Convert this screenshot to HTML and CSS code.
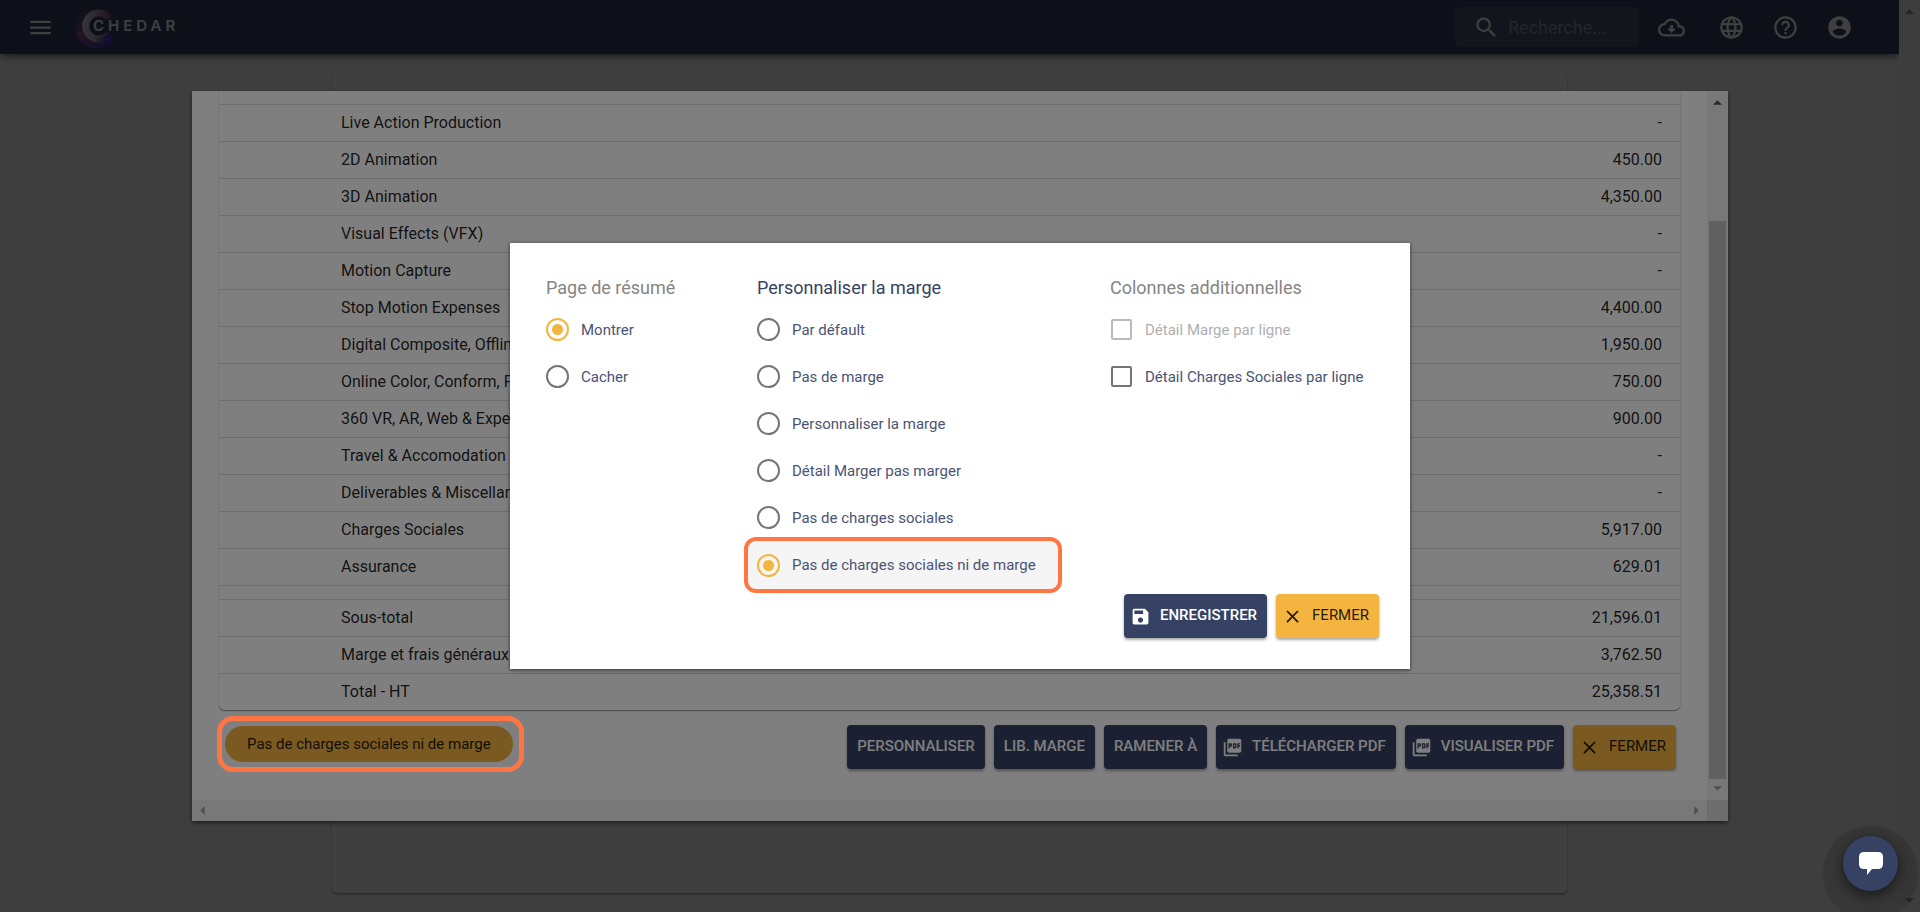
FILE: index.html
```html
<!DOCTYPE html>
<html lang="fr">
<head>
<meta charset="utf-8">
<title>Chedar</title>
<link rel="stylesheet" href="styles.css">
</head>
<body>
<svg class="defs" aria-hidden="true">
  <symbol id="close" viewBox="0 0 24 24"><path d="M19 6.41 17.59 5 12 10.59 6.41 5 5 6.41 10.59 12 5 17.59 6.41 19 12 13.41 17.59 19 19 17.59 13.41 12z"/></symbol>
  <symbol id="pdf" viewBox="0 0 24 24"><path d="M20 2H8c-1.100 0-2 .9-2 2v12c0 1.100.9 2 2 2h12c1.100 0 2-.9 2-2V4c0-1.100-.9-2-2-2zm-8.500 7.500c0 .83-.67 1.500-1.500 1.500H9v2H7.500V7H10c.83 0 1.500.67 1.500 1.500v1zm5 2c0 .83-.67 1.500-1.500 1.500h-2.500V7H15c.83 0 1.500.67 1.500 1.500v3zm4-3H19v1h1.500V11H19v2h-1.500V7h3v1.500zM9 9.500h1v-1H9v1zM4 6H2v14c0 1.100.9 2 2 2h14v-2H4V6zm10 5.500h1v-3h-1v3z"/></symbol>
  <symbol id="up" viewBox="0 0 10 5"><path d="M0 5 5 0l5 5z"/></symbol>
  <symbol id="down" viewBox="0 0 10 5"><path d="M0 0l5 5 5-5z"/></symbol>
  <symbol id="left" viewBox="0 0 5 10"><path d="M5 0 0 5l5 5z"/></symbol>
  <symbol id="right" viewBox="0 0 5 10"><path d="M0 0l5 5-5 5z"/></symbol>
</svg>
<div class="stage">
  <div class="page">
    <div class="view">
      <header class="topbar">
        <button class="icon-btn menu" aria-label="Menu"><svg viewBox="0 0 24 24"><path d="M3 18h18v-2H3v2zm0-5h18v-2H3v2zm0-7v2h18V6H3z"/></svg></button>
        <a class="brand" href="#" aria-label="Chedar">
          <svg class="brand-mark" viewBox="0 0 42 42">
            <defs>
              <linearGradient id="g1" gradientUnits="userSpaceOnUse" x1="4" y1="2" x2="36" y2="38"><stop offset="0" stop-color="#4a5078" stop-opacity="0.200"/><stop offset=".4" stop-color="#85508c"/><stop offset=".7" stop-color="#6a459c"/><stop offset="1" stop-color="#4d38c0"/></linearGradient>
              <linearGradient id="g2" gradientUnits="userSpaceOnUse" x1="8" y1="0" x2="36" y2="0"><stop offset="0" stop-color="#dcd6e0"/><stop offset=".4" stop-color="#c0b2c8"/><stop offset="1" stop-color="#8a4a85"/></linearGradient>
              <linearGradient id="g3" gradientUnits="userSpaceOnUse" x1="20" y1="0" x2="34" y2="0"><stop offset="0" stop-color="#5a40a8" stop-opacity="0"/><stop offset="1" stop-color="#4d38c0"/></linearGradient>
            </defs>
            <path d="M10 6A17 17 0 1 0 35 31" fill="none" stroke="url(#g1)" stroke-width="8" stroke-linecap="round"/>
            <path d="M33 8A13 13 0 1 0 33 28" fill="none" stroke="url(#g2)" stroke-width="7" stroke-linecap="round"/>
            <path d="M20 35Q29 36 35 31" fill="none" stroke="url(#g3)" stroke-width="10" stroke-linecap="round"/>
          </svg>
          <span class="brand-name">CHEDAR</span>
        </a>
        <label class="search">
          <svg viewBox="0 0 24 24"><path d="M15.500 14h-.79l-.28-.27A6.470 6.470 0 0 0 16 9.500 6.500 6.500 0 1 0 9.500 16c1.610 0 3.090-.59 4.230-1.570l.27.28v.79l5 4.990L20.490 19l-4.990-5zm-6 0C7.010 14 5 11.990 5 9.500S7.010 5 9.500 5 14 7.010 14 9.500 11.990 14 9.500 14z"/></svg>
          <input type="search" placeholder="Recherche..." aria-label="Recherche">
        </label>
        <nav class="actions">
          <button class="icon-btn" aria-label="Télécharger"><svg viewBox="0 0 24 24"><path d="M19.350 10.040A7.490 7.490 0 0 0 12 4C9.110 4 6.600 5.640 5.350 8.040A5.994 5.994 0 0 0 0 14c0 3.310 2.690 6 6 6h13c2.760 0 5-2.240 5-5 0-2.640-2.050-4.780-4.650-4.960zM19 18H6c-2.210 0-4-1.790-4-4s1.790-4 4-4h.71C7.370 7.690 9.480 6 12 6c3.040 0 5.500 2.460 5.500 5.500v.5H19c1.660 0 3 1.340 3 3s-1.340 3-3 3zm-5.550-8h-2.900v3H8l4 4 4-4h-2.550z"/></svg></button>
          <button class="icon-btn" aria-label="Langue"><svg viewBox="0 0 24 24"><path d="M11.990 2C6.470 2 2 6.480 2 12s4.470 10 9.990 10C17.520 22 22 17.520 22 12S17.520 2 11.990 2zm6.930 6h-2.950a15.650 15.650 0 0 0-1.380-3.560A8.030 8.030 0 0 1 18.920 8zM12 4.040c.83 1.200 1.480 2.530 1.910 3.960h-3.820c.43-1.430 1.080-2.760 1.910-3.960zM4.260 14C4.100 13.360 4 12.690 4 12s.1-1.360.26-2h3.380c-.08.66-.14 1.320-.14 2s.06 1.340.14 2H4.260zm.82 2h2.950c.32 1.250.78 2.450 1.380 3.560A7.987 7.987 0 0 1 5.080 16zm2.950-8H5.080a7.987 7.987 0 0 1 4.330-3.560A15.650 15.650 0 0 0 8.030 8zM12 19.960c-.83-1.200-1.480-2.530-1.910-3.960h3.820c-.43 1.430-1.080 2.760-1.910 3.960zM14.340 14H9.660c-.09-.66-.16-1.320-.16-2s.07-1.350.16-2h4.680c.09.65.16 1.320.16 2s-.07 1.340-.16 2zm.25 5.560c.6-1.110 1.060-2.310 1.380-3.560h2.950a8.030 8.030 0 0 1-4.330 3.560zM16.360 14c.08-.66.14-1.320.14-2s-.06-1.340-.14-2h3.380c.16.64.26 1.310.26 2s-.1 1.360-.26 2h-3.380z"/></svg></button>
          <button class="icon-btn" aria-label="Aide"><svg viewBox="0 0 24 24"><path d="M11 18h2v-2h-2v2zm1-16C6.480 2 2 6.480 2 12s4.480 10 10 10 10-4.480 10-10S17.520 2 12 2zm0 18c-4.410 0-8-3.590-8-8s3.590-8 8-8 8 3.590 8 8-3.590 8-8 8zm0-14c-2.210 0-4 1.790-4 4h2c0-1.100.9-2 2-2s2 .9 2 2c0 2-3 1.750-3 5h2c0-2.250 3-2.500 3-5 0-2.210-1.790-4-4-4z"/></svg></button>
          <button class="icon-btn" aria-label="Compte"><svg viewBox="0 0 24 24"><path d="M12 2C6.480 2 2 6.480 2 12s4.480 10 10 10 10-4.480 10-10S17.520 2 12 2zm0 3c1.660 0 3 1.340 3 3s-1.340 3-3 3-3-1.340-3-3 1.340-3 3-3zm0 14.200a7.200 7.200 0 0 1-6-3.220c.03-1.990 4-3.080 6-3.080 1.990 0 5.970 1.090 6 3.080a7.200 7.200 0 0 1-6 3.220z"/></svg></button>
        </nav>
      </header>
      <main class="content"><section class="card"></section></main>
    </div>
    <div class="vbar"><svg><use href="#up"/></svg><svg><use href="#down"/></svg></div>
  </div>

  <div class="backdrop"></div>

  <section class="report">
    <div class="report-body">
      <div class="sheet">
        <table class="costs">
          <tbody>
            <tr class="cut"><td></td><td></td></tr>
            <tr><td>Live Action Production</td><td>-</td></tr>
            <tr><td>2D Animation</td><td>450.00</td></tr>
            <tr><td>3D Animation</td><td>4,350.00</td></tr>
            <tr><td>Visual Effects (VFX)</td><td>-</td></tr>
            <tr><td>Motion Capture</td><td>-</td></tr>
            <tr><td>Stop Motion Expenses</td><td>4,400.00</td></tr>
            <tr><td>Digital Composite, Offline</td><td>1,950.00</td></tr>
            <tr><td>Online Color, Conform, Finishing</td><td>750.00</td></tr>
            <tr><td>360 VR, AR, Web &amp; Experiential</td><td>900.00</td></tr>
            <tr><td>Travel &amp; Accomodation</td><td>-</td></tr>
            <tr><td>Deliverables &amp; Miscellaneous</td><td>-</td></tr>
            <tr><td>Charges Sociales</td><td>5,917.00</td></tr>
            <tr><td>Assurance</td><td>629.01</td></tr>
            <tr class="gap"><td></td><td></td></tr>
            <tr><td>Sous-total</td><td>21,596.01</td></tr>
            <tr><td>Marge et frais généraux</td><td>3,762.50</td></tr>
            <tr><td>Total - HT</td><td>25,358.51</td></tr>
          </tbody>
        </table>
      </div>
      <div class="toolbar">
        <div class="chip-wrap"><button class="chip">Pas de charges sociales ni de marge</button></div>
        <div class="buttons">
          <button class="btn">PERSONNALISER</button>
          <button class="btn">LIB. MARGE</button>
          <button class="btn">RAMENER À</button>
          <button class="btn with-icon"><svg><use href="#pdf"/></svg>TÉLÉCHARGER PDF</button>
          <button class="btn with-icon"><svg><use href="#pdf"/></svg>VISUALISER PDF</button>
          <button class="btn with-icon amber"><svg><use href="#close"/></svg>FERMER</button>
        </div>
      </div>
    </div>
    <div class="vbar light"><svg><use href="#up"/></svg><div class="thumb"></div><svg><use href="#down"/></svg></div>
    <div class="hbar"><svg><use href="#left"/></svg><svg><use href="#right"/></svg></div>
    <div class="corner"></div>
  </section>

  <div class="backdrop over"></div>

  <form class="dialog">
    <div class="columns">
      <div class="group" role="radiogroup" aria-labelledby="t1">
        <h2 id="t1">Page de résumé</h2>
        <label class="option"><input type="radio" name="summary" checked>Montrer</label>
        <label class="option"><input type="radio" name="summary">Cacher</label>
      </div>
      <div class="group" role="radiogroup" aria-labelledby="t2">
        <h2 id="t2" class="strong">Personnaliser la marge</h2>
        <label class="option"><input type="radio" name="margin">Par défault</label>
        <label class="option"><input type="radio" name="margin">Pas de marge</label>
        <label class="option"><input type="radio" name="margin">Personnaliser la marge</label>
        <label class="option"><input type="radio" name="margin">Détail Marger pas marger</label>
        <label class="option"><input type="radio" name="margin">Pas de charges sociales</label>
        <label class="option picked"><input type="radio" name="margin" checked>Pas de charges sociales ni de marge</label>
      </div>
      <div class="group" role="group" aria-labelledby="t3">
        <h2 id="t3">Colonnes additionnelles</h2>
        <label class="option off"><input type="checkbox" disabled>Détail Marge par ligne</label>
        <label class="option"><input type="checkbox">Détail Charges Sociales par ligne</label>
      </div>
    </div>
    <div class="footer">
      <button type="button" class="btn with-icon"><svg viewBox="0 0 24 24"><path d="M17 3H5a2 2 0 0 0-2 2v14c0 1.100.89 2 2 2h14c1.100 0 2-.9 2-2V7l-4-4zm-5 16c-1.660 0-3-1.340-3-3s1.340-3 3-3 3 1.340 3 3-1.340 3-3 3zm3-10H5V5h10v4z"/></svg>ENREGISTRER</button>
      <button type="button" class="btn with-icon amber"><svg><use href="#close"/></svg>FERMER</button>
    </div>
  </form>

  <button class="chat" aria-label="Chat"><svg viewBox="0 0 24 23"><path d="M5 0h14q5 0 5 5v7q0 5-5 5h-6l-5 6v-6H5q-5 0-5-5V5q0-5 5-5z"/></svg></button>
</div>
</body>
</html>
```
FILE: styles.css
```css
* { box-sizing: border-box; }
body { margin: 0; font-family: Roboto, "Liberation Sans", sans-serif; }
button { font: inherit; border: 0; cursor: pointer; }
svg { fill: currentColor; flex: none; }
.defs { position: absolute; width: 0; height: 0; }

/* Layers share one grid cell: page, report window, dialog, chat. */
.stage { display: grid; height: 100vh; overflow: hidden; place-items: center; }
.page, .backdrop, .report, .dialog, .chat { grid-area: 1 / 1; }
.page { display: flex; width: 100%; height: 100%; background: #fafafa; }
.view { flex: 1; display: flex; flex-direction: column; }
.backdrop { position: relative; width: 100%; height: 100%; background: rgba(0, 0, 0, 0.5); }
.over { z-index: 2; }

.topbar { display: flex; align-items: center; height: 54px; padding: 0 46px 0 27px; background: #364264; color: #fff; box-shadow: 0 2px 8px rgba(0, 0, 0, 0.6); }
.icon-btn { display: grid; padding: 0; background: none; color: #fff; }
.icon-btn svg { width: 27px; height: 27px; }
.brand { display: flex; align-items: center; margin-left: 20px; color: #fff; text-decoration: none; }
.brand-mark { width: 42px; height: 42px; margin-top: 3px; overflow: visible; }
.brand-name { margin: 0 0 3px -23px; font: 600 15px Inter, sans-serif; letter-spacing: 4px; }
.search { display: flex; align-items: center; gap: 8px; width: 184px; height: 40px; margin-left: auto; padding: 0 9px 0 18px; border-radius: 4px; background: rgba(255, 255, 255, 0.1); }
.search svg { width: 27px; height: 27px; }
.search input { flex: 1; min-width: 0; padding: 0; border: 0; background: none; font: 18px Roboto, sans-serif; color: #fff; }
.search input::placeholder { color: rgba(255, 255, 255, 0.4); opacity: 1; }
.actions { display: flex; gap: 27px; margin-left: 19px; }
.actions .icon-btn:first-child { margin-right: 6px; }
.content { flex: 1; padding: 18px 332px 19px; }
.card { height: 100%; border-radius: 5px; background: #fcfcfc; box-shadow: 0 2px 2px rgba(0, 0, 0, 0.25), 0 0 2px rgba(0, 0, 0, 0.15); }

.vbar { display: flex; flex-direction: column; align-items: center; justify-content: space-between; width: 21px; padding: 9px 0; background: #f5f5f5; color: #8c8c8c; }
.vbar svg { width: 9px; height: 5px; }

.report { position: relative; display: grid; grid-template: 1fr 21px / 1fr 21px; width: 80vw; height: 80vh; background: #fff; box-shadow: 0 2px 4px rgba(0, 0, 0, 0.5); }
.report-body { padding: 0 27px; overflow: hidden; }
.sheet { border-radius: 0 0 5px 5px; box-shadow: 0 1px 1px rgba(0, 0, 0, 0.4), 0 0 2px rgba(0, 0, 0, 0.15); }
.costs { width: 100%; border-collapse: collapse; font-size: 16px; line-height: 20px; color: rgba(0, 0, 0, 0.87); }
.costs tr { height: 37px; border-bottom: 1px solid #dedede; }
.costs tr:last-child { border-bottom: 0; }
.costs .cut { height: 13px; }
.costs .gap { height: 14px; }
.costs td { padding: 0 0 0 122px; }
.costs td:last-child { padding: 0 18px 0 0; text-align: right; }
.toolbar { display: flex; align-items: flex-start; justify-content: space-between; padding: 15px 4px 0 6px; }
.chip-wrap { position: relative; padding-top: 1px; }
.chip-wrap::after { content: ""; position: absolute; z-index: 3; inset: -9px -11px -10px -8px; border: 5px solid #ff7643; border-radius: 16px; }
.chip { height: 36px; padding: 0 22px; border-radius: 18px; background: #f4b540; font-size: 15px; color: rgba(0, 0, 0, 0.87); }
.buttons { display: flex; gap: 9px; }
.btn { display: flex; align-items: center; gap: 9px; height: 44px; padding: 0 10px 3px; border-radius: 4px; background: #364264; color: #fff; font-size: 15px; font-weight: 500; box-shadow: 0 2px 3px rgba(0, 0, 0, 0.35); }
.btn.with-icon { padding-left: 6px; }
.btn svg { width: 21px; height: 21px; margin-top: 3px; }
.btn.amber { background: #f4b540; color: rgba(0, 0, 0, 0.87); font-weight: 400; }
.light { background: #f1f1f1; color: #a3a3a3; }
.light svg:first-child { color: #505050; }
.thumb { flex: 1; width: 17px; margin: 116px 0 7px; background: #c1c1c1; }
.hbar { display: flex; align-items: center; justify-content: space-between; padding: 0 8px; background: #f1f1f1; color: #a3a3a3; }
.hbar svg { width: 5px; height: 9px; }
.corner { background: #dcdcdc; }

.dialog { z-index: 4; width: 900px; padding: 27px 31px 31px 27px; background: #fff; box-shadow: 0 1px 4px rgba(0, 0, 0, 0.6); }
.columns { display: grid; grid-template-columns: 211px 353px 1fr; }
.group { display: flex; flex-direction: column; align-items: flex-start; }
h2 { margin: 0; padding-left: 9px; font-size: 18px; font-weight: 400; line-height: 36px; color: #858585; }
h2.strong { color: #364264; }
.option { display: flex; align-items: center; gap: 12px; height: 47px; padding: 0 22px 0 9px; font-size: 15px; color: #4a5474; white-space: nowrap; }
.option input { appearance: none; flex: none; width: 23px; height: 23px; margin: 0; border: 2px solid #757575; border-radius: 50%; }
.option input:checked { border-color: #f4b540; background: radial-gradient(circle, #f4b540 5px, transparent 6px); }
.option input[type="checkbox"] { width: 21px; height: 21px; margin: 0 1px; border-radius: 2px; }
.option.off { color: #b0b0b0; }
.off input[type="checkbox"] { border-color: #bababa; }
.picked { height: 48px; border-radius: 8px; background: #f5f5f5; box-shadow: 0 0 0 4px #ff7643; }
.footer { display: flex; justify-content: flex-end; gap: 9px; padding-top: 5px; }

.chat { z-index: 5; place-self: end; display: grid; place-items: center; width: 55px; height: 55px; margin: 0 22px 21px 0; padding: 0; border-radius: 50%; background: #364264; color: #fff; box-shadow: 0 4px 14px rgba(0, 0, 0, 0.6), 0 10px 0 20px rgba(0, 0, 0, 0.1); }
.chat svg { width: 24px; height: 23px; }
```
